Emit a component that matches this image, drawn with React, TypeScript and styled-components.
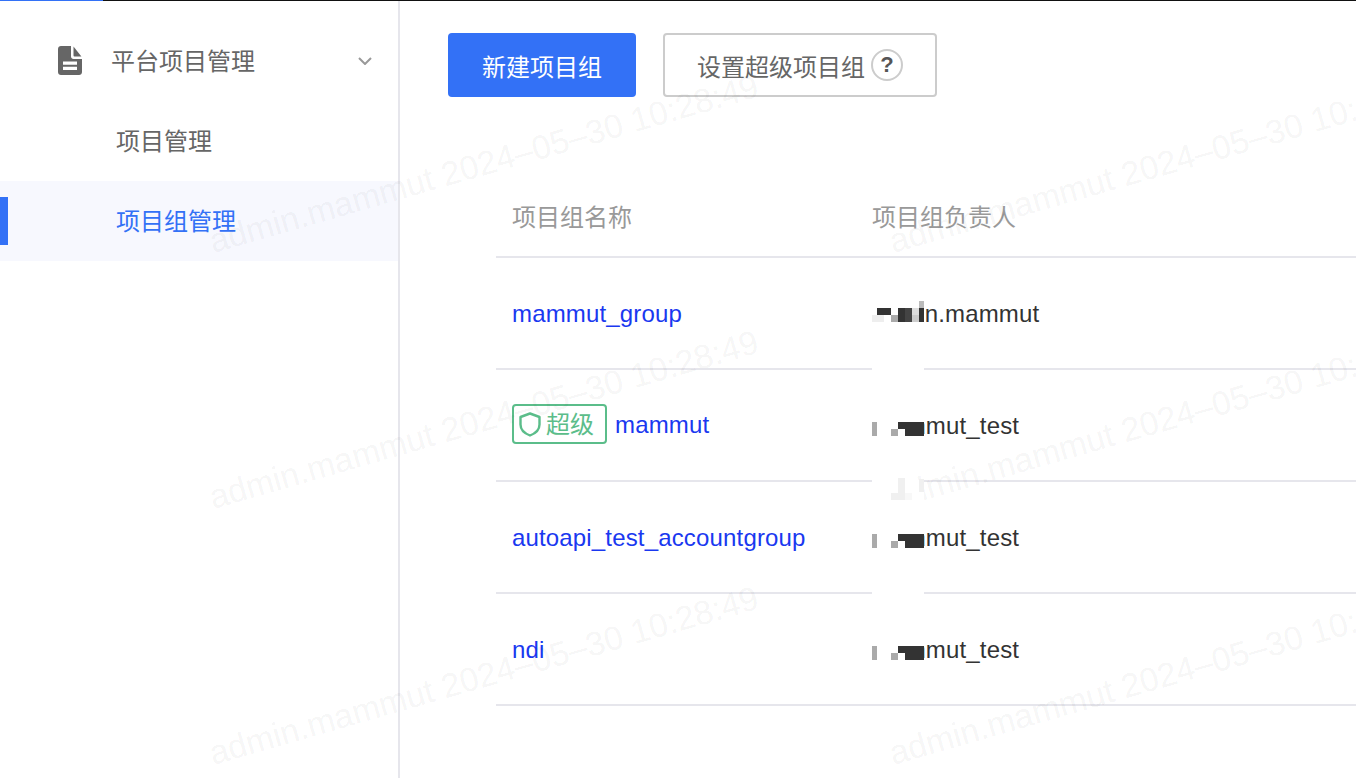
import styled, { createGlobalStyle } from 'styled-components';

type Pixel = [x: number, y: number, w: number, h: number, fill: string];

const testMask: Pixel[] = [
  [0, 0, 52, 80, '#fff'],
  [0, 54, 5, 14, '#aaa'],
  [19, 61, 7, 7, '#aaa'],
  [26, 54, 26, 7, '#333'],
  [33, 61, 19, 7, '#333'],
];

const groups: { name: string; owner: string; isSuper?: boolean; mask: Pixel[] }[] = [
  {
    name: 'mammut_group',
    owner: 'admin.mammut',
    mask: [
      [0, 40, 52, 40, '#fff'],
      [0, 59, 12, 7, '#eee'],
      [5, 52, 14, 7, '#333'],
      [19, 59, 7, 7, '#aaa'],
      [26, 52, 7, 14, '#333'],
      [33, 52, 7, 14, '#444'],
      [40, 52, 7, 7, '#ddd'],
      [40, 59, 7, 7, '#ccc'],
      [47, 45, 5, 7, '#bbb'],
      [47, 52, 5, 14, '#333'],
    ],
  },
  { name: 'mammut', owner: 'mammut_test', isSuper: true, mask: testMask },
  {
    name: 'autoapi_test_accountgroup',
    owner: 'mammut_test',
    mask: [
      ...testMask,
      [26, -2, 7, 15, '#f0f0f0'],
      [19, 13, 14, 7, '#f0f0f0'],
      [33, 13, 7, 7, '#f8f8f8'],
      [47, -1, 5, 13, '#f0f0f0'],
    ],
  },
  { name: 'ndi', owner: 'mammut_test', mask: testMask },
];

const WATERMARK_COUNT = 6;

const GlobalStyle = createGlobalStyle`
  html, body {
    margin: 0;
    height: 100%;
    overflow: hidden;
    background: #fff;
  }

  body {
    font-family: "Liberation Sans", "Noto Sans CJK SC", sans-serif;
    font-size: 24px;
    color: #666;
  }
`;

const App = () => {
  return (
    <>
      <GlobalStyle />
      <Page>
        <TopBar>
          <Progress />
        </TopBar>

        <Body>
          <Sidebar>
            <MenuHeader>
              <FileIcon viewBox="0 0 24 29">
                <path
                  fill="#666"
                  fillRule="evenodd"
                  d="M3 0h10v10.500c0 1.400 1.100 2.500 2.500 2.500H24v13c0 1.700-1.300 3-3 3H3c-1.700 0-3-1.300-3-3V3c0-1.700 1.300-3 3-3zM5 15.500v3.200h14v-3.200zM5 20.800V24h14v-3.200z"
                />
                <path fill="#666" d="M15.500 .6 23.400 10.500h-7c-.5 0-.9-.4-.9-.9z" />
              </FileIcon>
              <MenuTitle>平台项目管理</MenuTitle>
              <Chevron viewBox="0 0 14 8">
                <path d="M1 1l6 6 6-6" fill="none" stroke="#999" strokeWidth="2" />
              </Chevron>
            </MenuHeader>
            <MenuItem>项目管理</MenuItem>
            <MenuItem $active>项目组管理</MenuItem>
          </Sidebar>

          <Main>
            <Toolbar>
              <PrimaryButton>新建项目组</PrimaryButton>
              <OutlineButton>
                设置超级项目组
                <HelpMark>?</HelpMark>
              </OutlineButton>
            </Toolbar>

            <TableHead>
              <HeadCell>项目组名称</HeadCell>
              <HeadCell>项目组负责人</HeadCell>
            </TableHead>

            {groups.map((group) => (
              <Row key={group.name}>
                <NameCell>
                  {group.isSuper && (
                    <SuperBadge>
                      <ShieldIcon viewBox="0 0 22 25">
                        <path
                          d="M11 1.500 20.500 5v7.500c0 5.200-4 8.900-9.500 11-5.500-2.100-9.500-5.800-9.500-11V5z"
                          fill="none"
                          stroke="#5bbd8a"
                          strokeWidth="2.400"
                          strokeLinejoin="round"
                        />
                      </ShieldIcon>
                      <BadgeLabel>超级</BadgeLabel>
                    </SuperBadge>
                  )}
                  <GroupLink $raised={group.isSuper}>{group.name}</GroupLink>
                </NameCell>
                <OwnerCell>
                  {group.owner}
                  <Mask viewBox="0 0 52 112">
                    {group.mask.map(([x, y, w, h, fill]) => (
                      <rect key={`${x}-${y}-${fill}`} x={x} y={y} width={w} height={h} fill={fill} />
                    ))}
                  </Mask>
                </OwnerCell>
              </Row>
            ))}
          </Main>
        </Body>

        <WatermarkLayer>
          {Array.from({ length: WATERMARK_COUNT }, (_, i) => (
            <Watermark key={i}>admin.mammut 2024–05–30 10:28:49</Watermark>
          ))}
        </WatermarkLayer>
      </Page>
    </>
  );
};

const Page = styled.div`
  position: relative;
  display: flex;
  flex-direction: column;
  height: 778px;
  overflow: hidden;
`;

const TopBar = styled.div`
  flex: none;
  height: 1px;
  background: #111;
`;

const Progress = styled.div`
  width: 103px;
  height: 100%;
  background: #3371f6;
`;

const Body = styled.div`
  flex: 1;
  display: flex;
`;

const Sidebar = styled.aside`
  flex: none;
  box-sizing: border-box;
  width: 400px;
  padding-top: 20px;
  border-right: 2px solid #e6e6ec;
`;

const MenuHeader = styled.div`
  display: flex;
  align-items: center;
  height: 80px;
  padding: 0 26px 0 58px;
`;

const FileIcon = styled.svg`
  flex: none;
  width: 24px;
  height: 29px;
  margin: -1px 29px 0 0;
`;

const MenuTitle = styled.span`
  flex: 1;
  padding-bottom: 4px;
`;

const Chevron = styled.svg`
  width: 14px;
  height: 8px;
`;

const MenuItem = styled.div<{ $active?: boolean }>`
  position: relative;
  display: flex;
  align-items: center;
  box-sizing: border-box;
  height: 80px;
  padding: 0 0 4px 116px;
  color: ${(p) => (p.$active ? '#3371f6' : '#666')};
  background: ${(p) => (p.$active ? '#f7f8fe' : 'transparent')};

  &::before {
    content: '';
    display: ${(p) => (p.$active ? 'block' : 'none')};
    position: absolute;
    left: 0;
    top: 16px;
    width: 8px;
    height: 48px;
    background: #3371f6;
  }
`;

const Main = styled.main`
  flex: 1;
  min-width: 0;
  padding: 32px 0 0 96px;
`;

const Toolbar = styled.div`
  display: flex;
  gap: 27px;
  margin: 0 0 81px -48px;
`;

const PrimaryButton = styled.button`
  width: 188px;
  height: 64px;
  padding: 0;
  border: 0;
  border-radius: 4px;
  background: #3371f6;
  color: #fff;
  font: inherit;
`;

const OutlineButton = styled.button`
  display: flex;
  align-items: center;
  gap: 6px;
  box-sizing: border-box;
  width: 274px;
  height: 64px;
  padding: 0 0 0 32px;
  border: 2px solid #ccc;
  border-radius: 4px;
  background: #fff;
  color: #666;
  font: inherit;
`;

const HelpMark = styled.span`
  display: flex;
  align-items: center;
  justify-content: center;
  box-sizing: border-box;
  width: 32px;
  height: 32px;
  border: 2px solid #ccc;
  border-radius: 50%;
  color: #555;
  font-size: 22px;
  font-weight: 700;
`;

const TableHead = styled.div`
  display: grid;
  grid-template-columns: 376px 1fr;
  align-items: center;
  height: 80px;
  box-sizing: border-box;
  padding-bottom: 4px;
  border-bottom: 2px solid #e6e6ec;
`;

const HeadCell = styled.div`
  color: #999;

  &:first-child {
    padding-left: 16px;
  }
`;

const Row = styled.div`
  display: grid;
  grid-template-columns: 376px 1fr;
  box-sizing: border-box;
  height: 112px;
  border-bottom: 2px solid #e6e6ec;
  letter-spacing: 0.16px;
`;

const NameCell = styled.div`
  display: flex;
  align-items: center;
  padding: 2px 0 0 16px;
`;

const GroupLink = styled.a<{ $raised?: boolean }>`
  margin-top: ${(p) => (p.$raised ? '-2px' : '0')};
  color: #1a38f0;
`;

const SuperBadge = styled.span`
  display: flex;
  align-items: center;
  gap: 5px;
  box-sizing: border-box;
  width: 95px;
  height: 40px;
  margin: -4px 8px 0 0;
  padding-left: 5px;
  border: 2px solid #5bbd8a;
  border-radius: 4px;
  color: #5bbd8a;
  letter-spacing: 0;
`;

const BadgeLabel = styled.span`
  padding-bottom: 4px;
`;

const ShieldIcon = styled.svg`
  flex: none;
  width: 22px;
  height: 25px;
`;

const OwnerCell = styled.div`
  position: relative;
  display: flex;
  align-items: center;
  padding-top: 2px;
  color: #333;
`;

// pixelated cover over the start of the name, it also cuts the row line above it
const Mask = styled.svg`
  position: absolute;
  z-index: 2;
  left: 0;
  top: -2px;
  width: 52px;
  height: 112px;
  overflow: visible;
`;

const WatermarkLayer = styled.div`
  position: absolute;
  z-index: 1;
  inset: 0;
  display: grid;
  grid-template-columns: repeat(2, 680px);
  grid-auto-rows: 256px;
  padding: 35px 0 0 144px;
  overflow: hidden;
  pointer-events: none;
`;

const Watermark = styled.div`
  place-self: center;
  color: rgba(0, 0, 0, 0.055);
  font-size: 33.7px;
  white-space: nowrap;
  transform: rotate(-16deg);
`;

export default App;
